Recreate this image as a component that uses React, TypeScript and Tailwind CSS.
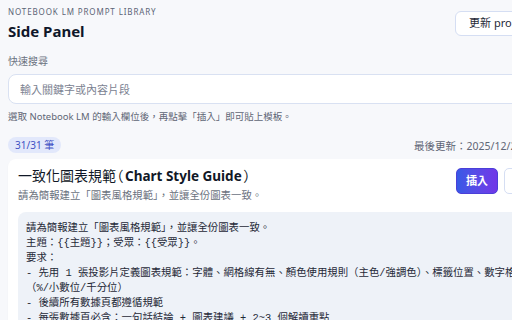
import React from "react";

const sans = "font-['Noto_Sans','Noto_Sans_CJK_TC',sans-serif]";

const promptText = `請為簡報建立「圖表風格規範」，並讓全份圖表一致。
主題：{{主題}}；受眾：{{受眾}}。
要求：
- 先用 1 張投影片定義圖表規範：字體、網格線有無、顏色使用規則（主色/強調色）、標籤位置、數字格式（%/小數位/千分位）
- 後續所有數據頁都遵循規範
- 每張數據頁必含：一句話結論 + 圖表建議 + 2~3 個解讀重點
- 最後提供一頁「圖表檢查清單」`;

export default function App() {
  return (
    <div className={`${sans} min-h-screen bg-[#f7f8fb] text-[#111827]`}>
      <div className="w-[560px] px-2 pt-[6px] pb-4">
        {/* header */}
        <div className="flex items-start justify-between">
          <div>
            <div className="text-[8px] leading-[12px] tracking-[0.11em] text-[#5b6476]">
              NOTEBOOK LM PROMPT LIBRARY
            </div>
            <h1 className="mt-[2px] text-[15px] font-bold leading-[22px] text-[#0f172a]">Side Panel</h1>
          </div>
          <button className="mt-[5px] h-[25px] rounded-md border border-[#d5def3] bg-white px-[13px] text-[11px] text-[#1f2937]">
            更新 prompts
          </button>
        </div>

        {/* search */}
        <div className="mt-3 text-[10px] leading-[14px] text-[#6b7280]">快速搜尋</div>
        <input
          className="mt-[6px] h-[30px] w-full rounded-lg border border-[#d9e1f2] bg-white px-[11px] text-[11px] outline-none placeholder:text-[#7b8291]"
          placeholder="輸入關鍵字或內容片段"
        />
        <p className="mt-[6px] text-[9.5px] leading-[14px] text-[#5f6675]">
          選取 Notebook LM 的輸入欄位後，再點擊「插入」即可貼上模板。
        </p>

        {/* meta row */}
        <div className="mt-[13px] flex items-end justify-between">
          <span className="rounded-full bg-[#e2e8fb] px-[7px] text-[10px] leading-[16px] text-[#4152c4]">
            31/31 筆
          </span>
          <span className="text-[10.5px] leading-[14px] text-[#5f6675]">最後更新：2025/12/23 14:30</span>
        </div>

        {/* card */}
        <div className="mt-[6px] rounded-lg bg-white px-[10px] pt-2 pb-3 shadow-[0_1px_2px_rgba(15,23,42,0.04)]">
          <div className="flex items-start justify-between">
            <div>
              <h2 className="text-[14px] leading-[18px] text-[#111827] [font-feature-settings:'palt']">
                一致化圖表規範（<span className="ml-[2px] mr-[2px] text-[13.5px] font-bold">Chart Style Guide</span>）
              </h2>
              <p className="mt-[2px] text-[10.4px] leading-[16px] text-[#6b7280]">
                請為簡報建立「圖表風格規範」，並讓全份圖表一致。
              </p>
            </div>
            <div className="mt-[1px] flex gap-[6px]">
              <button className="h-[26px] w-[42px] rounded-[5px] border border-[#4b3fd8] bg-linear-to-r from-[#3559e6] to-[#7136e8] text-[11px] font-bold text-white">
                插入
              </button>
              <button className="h-[26px] w-[38px] rounded-[5px] border border-[#d5def3] bg-white text-[11px] text-[#1f2937]">
                複製
              </button>
            </div>
          </div>
          <pre className="mt-[9px] whitespace-pre-wrap rounded-lg bg-[#eef2f8] px-2 pt-[9px] pb-2 font-['Liberation_Mono','Noto_Sans_CJK_TC',monospace] text-[10.4px] leading-[15px] text-[#1f2937]">
            {promptText}
          </pre>
        </div>
      </div>
    </div>
  );
}
